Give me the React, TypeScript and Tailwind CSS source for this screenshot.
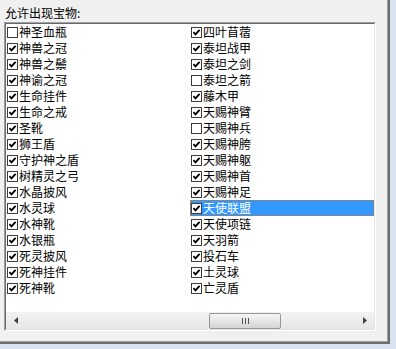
import React from "react";

type Item = { name: string; checked: boolean };

const left: Item[] = [
  { name: "神圣血瓶", checked: false },
  { name: "神兽之冠", checked: true },
  { name: "神兽之鬃", checked: true },
  { name: "神谕之冠", checked: true },
  { name: "生命挂件", checked: true },
  { name: "生命之戒", checked: true },
  { name: "圣靴", checked: true },
  { name: "狮王盾", checked: true },
  { name: "守护神之盾", checked: true },
  { name: "树精灵之弓", checked: true },
  { name: "水晶披风", checked: true },
  { name: "水灵球", checked: true },
  { name: "水神靴", checked: true },
  { name: "水银瓶", checked: true },
  { name: "死灵披风", checked: true },
  { name: "死神挂件", checked: true },
  { name: "死神靴", checked: true },
];

const right: Item[] = [
  { name: "四叶苜蓿", checked: true },
  { name: "泰坦战甲", checked: true },
  { name: "泰坦之剑", checked: true },
  { name: "泰坦之箭", checked: false },
  { name: "藤木甲", checked: true },
  { name: "天赐神臂", checked: true },
  { name: "天赐神兵", checked: false },
  { name: "天赐神胯", checked: true },
  { name: "天赐神躯", checked: true },
  { name: "天赐神首", checked: true },
  { name: "天赐神足", checked: true },
  { name: "天使联盟", checked: true },
  { name: "天使项链", checked: true },
  { name: "天羽箭", checked: true },
  { name: "投石车", checked: true },
  { name: "土灵球", checked: true },
  { name: "亡灵盾", checked: true },
];

const SELECTED = "天使联盟";

function Box({ checked }: { checked: boolean }) {
  return (
    <svg width="11" height="11" viewBox="0 0 11 11" className="shrink-0">
      <rect x="0.5" y="0.5" width="10" height="10" fill="#fff" stroke="#3c3c3c" />
      {checked ? (
        <path d="M2.5 5.2 L4.5 7.4 L8.6 2.8" fill="none" stroke="#000" strokeWidth="1.8" />
      ) : null}
    </svg>
  );
}

function Row({ item }: { item: Item }) {
  const sel = item.name === SELECTED;
  return (
    <div
      className={
        sel
          ? "flex h-[16px] items-center bg-[#3399ff] pl-px text-white outline-1 outline-dotted -outline-offset-1 outline-[#c8701c]"
          : "flex h-[16px] items-center pl-px text-black"
      }
    >
      <Box checked={item.checked} />
      <span className="ml-px whitespace-nowrap text-[12px] leading-[16px]">{item.name}</span>
    </div>
  );
}

export default function App() {
  return (
    <div className="h-[349px] w-[396px] overflow-hidden bg-[#d9e4f0] font-['Noto_Sans_CJK_SC','Noto_Sans',sans-serif]">
      <div className="h-[344px] w-[390px] border-r-2 border-b-2 border-[#6d6d6d]">
        <div className="flex h-full flex-col border-r border-b border-[#a0a0a0] bg-[#f0f0f0]">
          <div className="ml-[5px] mt-[7px] h-[12px] text-[12px] leading-[12px] text-black">
            允许出现宝物:
          </div>
          <div className="ml-[4px] mt-[3px] h-[309px] w-[372px] border border-t-[#a0a0a0] border-l-[#a0a0a0] border-r-white border-b-white">
            <div className="flex h-full flex-col border border-t-[#696969] border-l-[#696969] border-r-[#e3e3e3] border-b-[#e3e3e3] bg-white">
              <div className="flex flex-1">
                <div className="flex w-[184px] flex-col">
                  {left.map((it) => (
                    <Row key={it.name} item={it} />
                  ))}
                </div>
                <div className="flex flex-1 flex-col">
                  {right.map((it) => (
                    <Row key={it.name} item={it} />
                  ))}
                </div>
              </div>
              <div className="relative flex h-[17px] items-center bg-gradient-to-b from-[#f2f2f2] to-[#e6e6e6]">
                <div className="flex w-[17px] justify-center pl-[2px]">
                  <svg width="4" height="7" viewBox="0 0 4 7">
                    <path d="M4 0 L0 3.5 L4 7 Z" fill="#404040" />
                  </svg>
                </div>
                <div className="ml-[186px] flex h-[16px] w-[72px] items-center justify-center gap-[2px] rounded-[2px] border border-[#979797] bg-gradient-to-b from-[#f6f6f6] to-[#d4d4d4]">
                  <span className="h-[6px] w-px bg-[#555]" />
                  <span className="h-[6px] w-px bg-[#555]" />
                  <span className="h-[6px] w-px bg-[#555]" />
                </div>
                <div className="ml-auto flex w-[17px] justify-center pr-[2px]">
                  <svg width="4" height="7" viewBox="0 0 4 7">
                    <path d="M0 0 L4 3.5 L0 7 Z" fill="#404040" />
                  </svg>
                </div>
              </div>
            </div>
          </div>
        </div>
      </div>
    </div>
  );
}
